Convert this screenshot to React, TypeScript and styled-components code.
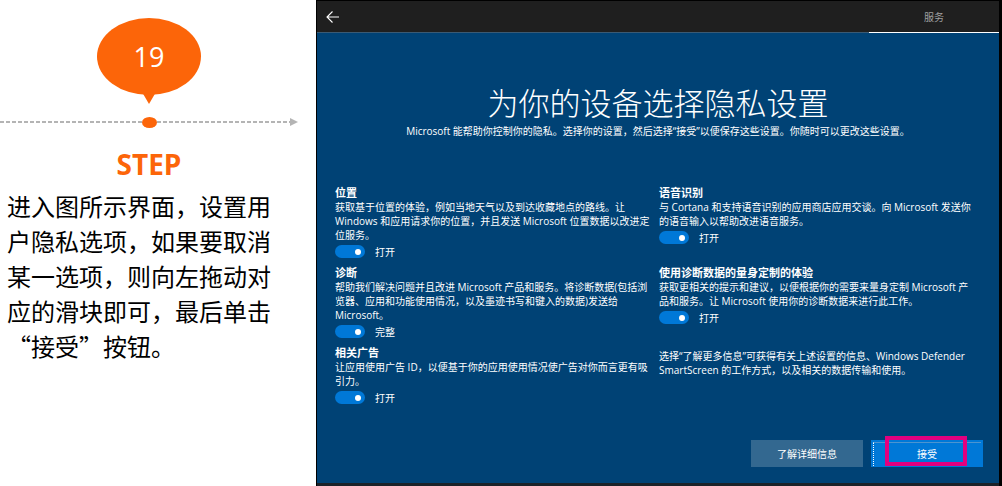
import React from "react";
import styled, { createGlobalStyle } from "styled-components";

const GlobalStyle = createGlobalStyle`
  *, *::before, *::after { box-sizing: border-box; }
  body { margin: 0; background: #fff; }
  h1, h2, h3, p { margin: 0; }
`;

const Page = styled.div`
  display: grid;
  grid-template-columns: 316fr 686fr;
  min-height: 100vh;
`;

const StepPanel = styled.aside`
  display: flex;
  flex-direction: column;
  padding: 18px 0 0;
`;

const StepHead = styled.div`
  display: flex;
  flex-direction: column;
  align-items: center;
  padding-right: 18px;
`;

const Bubble = styled.div`
  display: grid;
  place-items: center;
  width: 104px;
  height: 77px;
  border-radius: 50%;
  background: #fc6509;
  color: #fff;
  font: 27px/36px "Open Sans", "Noto Sans", sans-serif;
`;

const BubbleTail = styled.svg`
  display: block;
  width: 14px;
  height: 12px;
  margin-top: -3px;
`;

const Timeline = styled.div`
  display: flex;
  align-items: center;
  height: 12px;
  margin: 12px 18px 0 0;
`;

const Track = styled.div`
  display: flex;
  align-items: center;
  flex: 1 1 0;
`;

const Dashes = styled.span`
  flex: 1;
  height: 2px;
  background: repeating-linear-gradient(90deg, #b4b4b4 0 4px, #fff 4px 6px);
`;

const Dot = styled.span`
  width: 15px;
  height: 11px;
  border-radius: 50%;
  background: #fc6509;
`;

const ArrowHead = styled.svg`
  display: block;
  width: 8px;
  height: 8px;
`;

const StepTitle = styled.h2`
  margin-top: 18px;
  padding-right: 18px;
  text-align: center;
  color: #fc6509;
  font: 700 28px/36px "Open Sans", "Noto Sans", sans-serif;
`;

const StepText = styled.p`
  padding: 6px 38px 0 7px;
  color: #000;
  font: 24px/35px "Noto Sans CJK SC", sans-serif;
  line-break: anywhere;
`;

const Setup = styled.main`
  display: flex;
  flex-direction: column;
  border: solid #000;
  border-width: 1px 3px 0 1px;
  background: #004275;
  color: #fff;
  font: 10px/14px "Open Sans", "Noto Sans CJK SC", sans-serif;
`;

const TopBar = styled.header`
  display: flex;
  justify-content: space-between;
  height: 32px;
  background: #1f1f1f;
  box-shadow: inset 0 -1px #3a5a74;
`;

const BackButton = styled.button`
  display: grid;
  place-items: center;
  width: 32px;
  height: 32px;
  padding: 0;
  border: 0;
  background: none;
  color: #fff;
`;

const Tab = styled.a`
  width: 130px;
  border-bottom: 1px solid #fff;
  color: #a0a0a0;
  line-height: 32px;
  text-align: center;
  text-decoration: none;
`;

const Intro = styled.div`
  margin-top: 47px;
  text-align: center;
`;

const Title = styled.h1`
  font: 300 31px/44px "Noto Sans CJK SC", sans-serif;
`;

const Settings = styled.div`
  display: grid;
  grid-template-columns: 1fr 1fr;
  row-gap: 8px;
  align-items: start;
  margin-top: 48px;
  padding: 0 16px 0 18px;
`;

const SettingBox = styled.section`
  padding-right: 8px;
`;

const SettingName = styled.h3`
  font-size: 11px;
  line-height: 14px;
  font-weight: 700;
`;

const ToggleLabel = styled.label`
  display: flex;
  align-items: center;
  gap: 10px;
  height: 13px;
  margin-top: 3px;
`;

const Switch = styled.input`
  appearance: none;
  display: flex;
  align-items: center;
  width: 30px;
  height: 13px;
  margin: 0;
  padding: 0 4px;
  border-radius: 7px;
  background: #0078d7;
  &::before {
    content: "";
    width: 6px;
    height: 6px;
    border-radius: 50%;
    background: #fff;
  }
  &:checked { justify-content: flex-end; }
`;

const Note = styled.p`
  padding: 3px 8px 0 0;
`;

const Actions = styled.footer`
  display: flex;
  justify-content: flex-end;
  gap: 8px;
  margin-top: auto;
  padding: 16px 16px;
  border-bottom: 3px solid #1b2229;
`;

const Action = styled.button<{ $primary?: boolean }>`
  position: relative;
  width: 112px;
  height: 27px;
  padding: 0;
  border: 0;
  background: ${(p) => (p.$primary ? "#0078d7" : "#336890")};
  color: #fff;
  font: inherit;
`;

const FocusMark = styled.span`
  position: absolute;
  inset: 2px 2px 1px 2px;
  border-left: 1px dotted #fff;
  border-top: 1px solid #4d94cf;
`;

const Highlight = styled.span`
  position: absolute;
  inset: -4px 16px 1px 14px;
  border: 4px solid #e3007f;
`;

type SettingProps = { name: string; text: string; state: string };

function Setting({ name, text, state }: SettingProps) {
  return (
    <SettingBox>
      <SettingName>{name}</SettingName>
      <p>{text}</p>
      <ToggleLabel>
        <Switch type="checkbox" role="switch" defaultChecked />
        {state}
      </ToggleLabel>
    </SettingBox>
  );
}

const settings: SettingProps[] = [
  {
    name: "位置",
    text: "获取基于位置的体验，例如当地天气以及到达收藏地点的路线。让 Windows 和应用请求你的位置，并且发送 Microsoft 位置数据以改进定位服务。",
    state: "打开",
  },
  {
    name: "语音识别",
    text: "与 Cortana 和支持语音识别的应用商店应用交谈。向 Microsoft 发送你的语音输入以帮助改进语音服务。",
    state: "打开",
  },
  {
    name: "诊断",
    text: "帮助我们解决问题并且改进 Microsoft 产品和服务。将诊断数据(包括浏览器、应用和功能使用情况，以及墨迹书写和键入的数据)发送给 Microsoft。",
    state: "完整",
  },
  {
    name: "使用诊断数据的量身定制的体验",
    text: "获取更相关的提示和建议，以便根据你的需要来量身定制 Microsoft 产品和服务。让 Microsoft 使用你的诊断数据来进行此工作。",
    state: "打开",
  },
  {
    name: "相关广告",
    text: "让应用使用广告 ID，以便基于你的应用使用情况使广告对你而言更有吸引力。",
    state: "打开",
  },
];

export default function App() {
  return (
    <Page lang="zh-CN">
      <GlobalStyle />
      <StepPanel>
        <StepHead>
          <Bubble>19</Bubble>
          <BubbleTail viewBox="0 0 14 12">
            <path d="M0 0H14L7 12Z" fill="#fc6509" />
          </BubbleTail>
        </StepHead>
        <Timeline>
          <Track>
            <Dashes />
          </Track>
          <Dot />
          <Track>
            <Dashes />
            <ArrowHead viewBox="0 0 8 8">
              <path d="M0 0L8 4L0 8Z" fill="#b4b4b4" />
            </ArrowHead>
          </Track>
        </Timeline>
        <StepTitle>STEP</StepTitle>
        <StepText>
          进入图所示界面，设置用户隐私选项，如果要取消某一选项，则向左拖动对应的滑块即可，最后单击“接受”按钮。
        </StepText>
      </StepPanel>
      <Setup>
        <TopBar>
          <BackButton aria-label="返回">
            <svg width="14" height="12" viewBox="0 0 14 12" fill="none" stroke="currentColor" strokeWidth="1.1">
              <path d="M13 6H1M6.5 0.5L1 6L6.5 11.5" />
            </svg>
          </BackButton>
          <Tab href="#services">服务</Tab>
        </TopBar>
        <Intro>
          <Title>为你的设备选择隐私设置</Title>
          <p>Microsoft 能帮助你控制你的隐私。选择你的设置，然后选择“接受”以便保存这些设置。你随时可以更改这些设置。</p>
        </Intro>
        <Settings>
          {settings.map((s) => (
            <Setting key={s.name} {...s} />
          ))}
          <Note>
            选择“了解更多信息”可获得有关上述设置的信息、Windows Defender SmartScreen 的工作方式，以及相关的数据传输和使用。
          </Note>
        </Settings>
        <Actions>
          <Action type="button">了解详细信息</Action>
          <Action type="button" $primary>
            <FocusMark />
            接受
            <Highlight />
          </Action>
        </Actions>
      </Setup>
    </Page>
  );
}
